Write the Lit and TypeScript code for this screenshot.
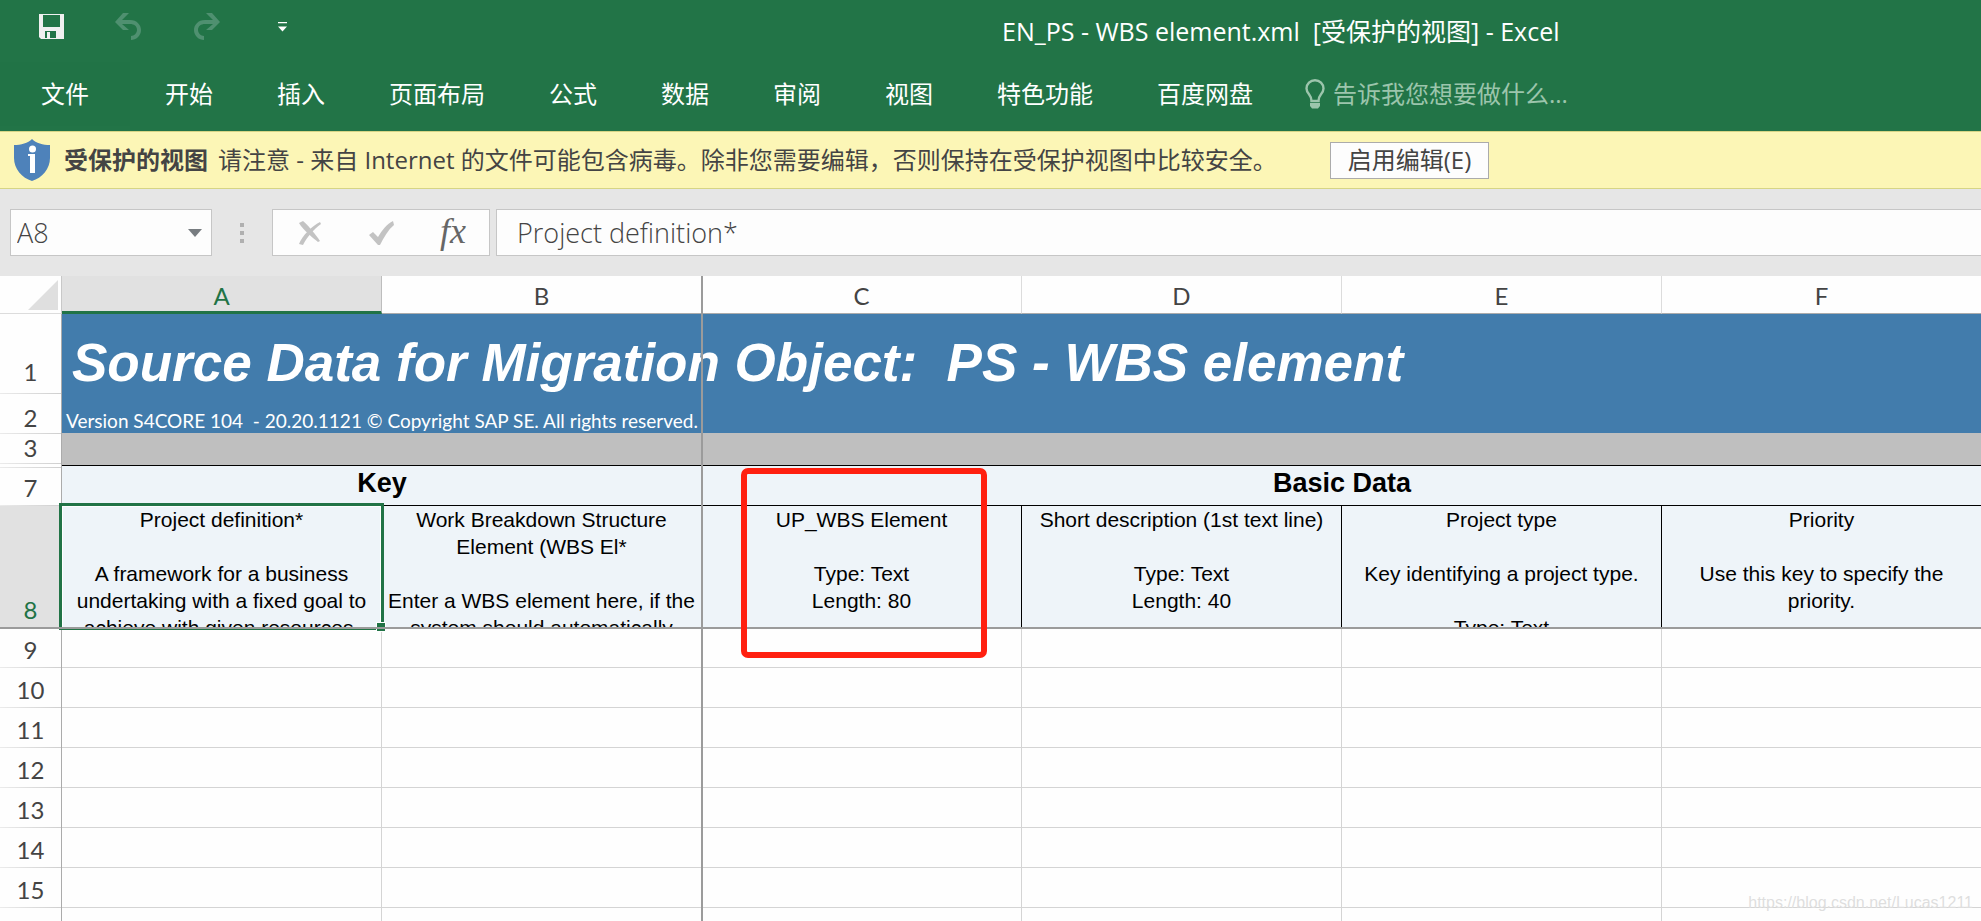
import { LitElement, html, css, nothing } from "lit";
import { customElement, property, state } from "lit/decorators.js";

const UI_FONT = css`"Open Sans", "Noto Sans CJK SC", sans-serif`;

const TABS = ["开始", "插入", "页面布局", "公式", "数据", "审阅", "视图", "特色功能", "百度网盘"];
const COLUMNS = ["A", "B", "C", "D", "E", "F"];
const EMPTY_ROWS = [9, 10, 11, 12, 13, 14, 15];

const FIELDS: string[][] = [
  ["Project definition*", "", "A framework for a business", "undertaking with a fixed goal to", "achieve with given resources."],
  ["Work Breakdown Structure", "Element (WBS El*", "", "Enter a WBS element here, if the", "system should automatically"],
  ["UP_WBS Element", "", "Type: Text", "Length: 80"],
  ["Short description (1st text line)", "", "Type: Text", "Length: 40"],
  ["Project type", "", "Key identifying a project type.", "", "Type: Text"],
  ["Priority", "", "Use this key to specify the", "priority."],
];

@customElement("title-bar")
class TitleBar extends LitElement {
  static styles = css`
    :host {
      display: flex;
      align-items: center;
      height: 62px;
      background: #227447;
      color: #fff;
      font: 25px/32px ${UI_FONT};
    }
    .quick {
      display: flex;
      align-items: center;
      flex: none;
      width: 1002px;
      height: 52px;
      align-self: flex-start;
      box-sizing: border-box;
      padding-left: 38px;
    }
    button {
      display: block;
      border: 0;
      padding: 0;
      margin: 0;
      background: none;
    }
    svg { display: block; }
    .undo { margin-left: 50px; }
    .redo { margin-left: 51px; }
    .more { margin-left: 58px; padding-top: 2px; }
    .name { white-space: pre; }
  `;
  render() {
    return html`
      <div class="quick">
        <button aria-label="保存">
          <svg width="27" height="26" viewBox="0 0 27 26">
            <path fill="#f0f0f0" fill-rule="evenodd" d="M1 1H26V26H3L1 24ZM5 2V14H22V2ZM7 18V25H9V19H12V25H18V18Z" />
          </svg>
        </button>
        <button class="undo" aria-label="撤消">
          <svg width="27" height="27" viewBox="0 0 27 27">
            <path fill="#4f9070" d="M8 0H14L7 7H15C22 7 26 12 26 17C26 23 21 27 16 27V23C19 23 22 20 22 17C22 13 19 11 15 11H7L14 17H8L0 9Z" />
          </svg>
        </button>
        <button class="redo" aria-label="恢复">
          <svg width="27" height="27" viewBox="0 0 27 27">
            <path fill="#4f9070" d="M19 0H13L20 7H12C5 7 1 12 1 17C1 23 6 27 11 27V23C8 23 5 20 5 17C5 13 8 11 12 11H20L13 17H19L27 9Z" />
          </svg>
        </button>
        <button class="more" aria-label="自定义快速访问工具栏">
          <svg width="9" height="10" viewBox="0 0 9 10"><path fill="#fff" d="M0 0H9V1.300H0ZM0 4.500H9L4.500 9.500Z" /></svg>
        </button>
      </div>
      <div class="name">EN_PS - WBS element.xml  [受保护的视图] - Excel</div>
    `;
  }
}

@customElement("ribbon-tabs")
class RibbonTabs extends LitElement {
  static styles = css`
    :host {
      display: flex;
      height: 69px;
      background: #227447;
      color: #fff;
      font: 24px/32px ${UI_FONT};
    }
    nav { display: flex; }
    button {
      height: 64px;
      margin: 0;
      border: 0;
      padding: 0 32px;
      background: none;
      color: inherit;
      font: inherit;
      white-space: nowrap;
    }
    .file {
      padding: 0 41px;
      margin-right: 3px;
      background: #217346;
    }
    label {
      display: flex;
      align-items: center;
      height: 64px;
      margin-left: 20px;
      gap: 8px;
    }
    svg { display: block; }
    input {
      width: 300px;
      border: 0;
      padding: 0;
      background: none;
      color: #fff;
      font: inherit;
      outline: none;
    }
    input::placeholder { color: #9cc5ac; opacity: 1; }
  `;
  render() {
    return html`
      <nav>
        <button class="file">文件</button>
        ${TABS.map((t) => html`<button>${t}</button>`)}
      </nav>
      <label>
        <svg width="20" height="30" viewBox="0 0 20 30" fill="none" stroke="#9cc5ac" stroke-width="2.400">
          <path d="M6.500 22C7 16 1.500 15 1.500 9.500A8.500 8.300 0 0 1 18.500 9.500C18.500 15 13 16 13.500 22Z" />
          <path fill="#9cc5ac" stroke="none" d="M5 24H15V27L13 29.500H7L5 27Z" />
        </svg>
        <input aria-label="告诉我您想要做什么" placeholder="告诉我您想要做什么..." />
      </label>
    `;
  }
}

@customElement("protected-bar")
class ProtectedBar extends LitElement {
  static styles = css`
    :host {
      display: flex;
      align-items: center;
      height: 58px;
      box-sizing: border-box;
      border-top: 1px solid #d6d585;
      border-bottom: 1px solid #d6d585;
      padding-left: 13px;
      background: #fcf6b6;
      color: #444;
      font: 24px/32px ${UI_FONT};
      white-space: nowrap;
    }
    svg { display: block; flex: none; }
    strong { margin-left: 13px; }
    .text { margin-left: 10px; width: 1112px; }
    button {
      box-sizing: border-box;
      height: 37px;
      margin: 0;
      width: 159px;
      border: 1px solid #ababab;
      padding: 0;
      background: #fdfdfd;
      color: inherit;
      font: inherit;
    }
  `;
  render() {
    return html`
      <svg width="38" height="42" viewBox="0 0 38 42">
        <path fill="#4e82ba" d="M19 0C23 4 30 6 37 6V19C37 30 29 39 19 42C9 39 1 30 1 19V6C8 6 15 4 19 0Z" />
        <circle cx="19.500" cy="10" r="3.500" fill="#fff" />
        <path fill="#fff" d="M15 15H22V34H17V17H15Z" />
      </svg>
      <strong>受保护的视图</strong>
      <span class="text">请注意 - 来自 Internet 的文件可能包含病毒。除非您需要编辑，否则保持在受保护视图中比较安全。</span>
      <button>启用编辑(E)</button>
    `;
  }
}

@customElement("formula-bar")
class FormulaBar extends LitElement {
  @property() cell = "A8";
  @property() content = "";

  static styles = css`
    :host {
      display: flex;
      align-items: center;
      height: 87px;
      box-sizing: border-box;
      padding-left: 10px;
      background: #e6e6e6;
      color: #444;
      font: 27px/36px ${UI_FONT};
    }
    .box {
      display: flex;
      align-items: center;
      box-sizing: border-box;
      height: 47px;
      border: 1px solid #c6c6c6;
      background: #fdfdfd;
    }
    .name {
      width: 202px;
      padding-right: 9px;
    }
    select {
      flex: 1;
      appearance: none;
      margin: 0;
      border: 0;
      padding: 0 0 0 6px;
      background: none;
      color: inherit;
      font: inherit;
      font-weight: 300;
      outline: none;
    }
    .grip {
      display: grid;
      gap: 4px;
      width: 60px;
      justify-content: center;
    }
    .grip i { width: 4px; height: 4px; background: #b0b0b0; }
    .tools {
      width: 218px;
      padding-left: 25px;
      gap: 47px;
    }
    button { margin: 0; border: 0; padding: 0; background: none; color: #666; }
    .fx { font: italic 36px/36px "Liberation Serif", serif; margin-left: -2px; padding-bottom: 4px; }
    svg { display: block; flex: none; }
    .formula { flex: 1; margin-left: 6px; border-right: 0; }
    input {
      flex: 1;
      min-width: 0;
      border: 0;
      padding: 0 0 0 20px;
      background: none;
      color: inherit;
      font: inherit;
      font-weight: 300;
      outline: none;
    }
  `;
  render() {
    return html`
      <div class="box name">
        <select aria-label="名称框"><option>${this.cell}</option></select>
        <svg width="14" height="8" viewBox="0 0 14 8"><path fill="#777c80" d="M0 0H14L7 8Z" /></svg>
      </div>
      <div class="grip"><i></i><i></i><i></i></div>
      <div class="box tools">
        <button aria-label="取消">
          <svg width="24" height="24" viewBox="0 0 24 24" fill="#c3c3c3">
            <path d="M1 2L5 0C9 3 18 14 22 20L20 21C16 18 5 9 1 2Z" />
            <path d="M22 1L23 3C16 8 9 16 5 24L1 23C4 15 14 5 22 1Z" />
          </svg>
        </button>
        <button aria-label="输入">
          <svg width="26" height="24" viewBox="0 0 26 24"><path fill="#c3c3c3" d="M0 14L4 11L9 16C13 9 18 3 24 0L25 4C19 9 15 16 11 24H9Z" /></svg>
        </button>
        <button class="fx" aria-label="插入函数">fx</button>
      </div>
      <div class="box formula">
        <input aria-label="编辑栏" .value=${this.content} />
      </div>
    `;
  }
}

@customElement("sheet-grid")
class SheetGrid extends LitElement {
  static styles = css`
    :host {
      display: block;
      position: relative;
      background: #fefefe;
      color: #444;
      font: 24px/28px Lato, sans-serif;
    }
    table {
      width: 100%;
      table-layout: fixed;
      border-collapse: separate;
      border-spacing: 0;
    }
    .rows { width: 62px; }
    th, td { box-sizing: border-box; padding: 0; font-weight: 400; }

    thead th {
      height: 38px;
      border-right: 1px solid #dcdcdc;
      border-bottom: 1px solid #ababab;
      padding-top: 2px;
    }
    thead th.active {
      border-right-color: #bdbdbd;
      border-bottom: 3px solid #217346;
      padding-top: 4px;
      background: #e1e1e1;
      color: #217346;
    }
    thead .corner { padding: 0; border-bottom-color: #dcdcdc; border-right-color: #c8c8c8; }
    .corner svg { display: block; margin: 4px 0 3px 28px; }

    tbody th {
      height: 40px;
      border-right: 1px solid #ababab;
      padding-bottom: 4px;
      vertical-align: bottom;
      background: linear-gradient(90deg, #ebebeb, #cfcfcf) bottom / 100% 1px no-repeat;
    }
    tbody th.r1 { height: 80px; padding-bottom: 8px; }
    tbody th.r2 { padding-bottom: 2px; }
    tbody th.r3 { height: 30px; padding-bottom: 2px; }
    tbody th.thin { height: 4px; padding: 0; line-height: 0; }
    tbody th.r7 { height: 38px; }
    tbody th.r8 { height: 122px; background: #e1e1e1; color: #217346; }

    .title {
      padding: 0 0 1px 10px;
      vertical-align: bottom;
      background: #427cac;
      color: #fff;
      font: italic 700 53px/60px "Liberation Sans", sans-serif;
      white-space: pre;
    }
    .version {
      border-bottom: 1px solid #bfbfbf;
      padding-left: 4px;
      vertical-align: bottom;
      background: #427cac;
      color: #fff;
      font-size: 19px;
      line-height: 24px;
      white-space: pre;
    }
    .gap { background: #bfbfbf; }
    .edge { background: linear-gradient(#bfbfbf 1px, #000 1px 2px, #eef4f9 2px); }
    .group {
      border-bottom: 1px solid #000;
      vertical-align: top;
      text-align: center;
      background: #eef4f9;
      color: #000;
      font: 700 27px/30px "Liberation Sans", sans-serif;
    }
    .field {
      position: relative;
      border-right: 1px solid #000;
      vertical-align: top;
      text-align: center;
      background: #eef4f9;
      color: #000;
      font: 21px/27px "Liberation Sans", sans-serif;
      white-space: nowrap;
    }
    .clip { height: 121px; overflow: hidden; }
    .clip div { min-height: 27px; }
    .cell { border-right: 1px solid #d4d4d4; border-bottom: 1px solid #d4d4d4; }

    .selection {
      position: absolute;
      z-index: 1;
      inset: -3px -3px -2px -3px;
      border: 3px solid #217346;
      border-bottom-width: 1px;
      box-shadow: inset 0 0 0 1px #fff;
    }
    .handle {
      position: absolute;
      z-index: 1;
      right: -4px;
      bottom: -3px;
      width: 8px;
      height: 8px;
      background: #217346;
      box-shadow: 0 0 0 1px #fff;
    }
    .mark {
      position: absolute;
      z-index: 2;
      top: -38px;
      left: 39px;
      width: 246px;
      height: 190px;
      box-sizing: border-box;
      border: 6px solid #ff2010;
      border-radius: 7px;
    }
    .freeze-x, .freeze-y { position: absolute; z-index: 1; background: #9b9b9b; }
    .freeze-x { left: 0; right: 0; top: 351px; height: 2px; }
    .freeze-y { top: 0; bottom: 0; width: 2px; left: calc(62px + (100% - 62px) / 3 - 1px); }
  `;

  render() {
    return html`
      <table>
        <colgroup><col class="rows" />${COLUMNS.map(() => html`<col />`)}</colgroup>
        <thead>
          <tr>
            <th class="corner">
              <svg width="30" height="30" viewBox="0 0 30 30"><path fill="#dfdfdf" d="M30 0V30H0Z" /></svg>
            </th>
            ${COLUMNS.map((c) => html`<th scope="col" class=${c === "A" ? "active" : ""}>${c}</th>`)}
          </tr>
        </thead>
        <tbody>
          <tr><th scope="row" class="r1">1</th><td class="title" colspan="6">Source Data for Migration Object:  PS - WBS element</td></tr>
          <tr><th scope="row" class="r2">2</th><td class="version" colspan="6">Version S4CORE 104  - 20.20.1121 © Copyright SAP SE. All rights reserved.</td></tr>
          <tr><th scope="row" class="r3">3</th><td class="gap" colspan="6"></td></tr>
          <tr><th class="thin"></th><td class="edge" colspan="6"></td></tr>
          <tr>
            <th scope="row" class="r7">7</th>
            <td class="group" colspan="2">Key</td>
            <td class="group" colspan="4">Basic Data</td>
          </tr>
          <tr>
            <th scope="row" class="r8">8</th>
            ${FIELDS.map(
              (lines, i) => html`<td class="field">
                <div class="clip">${lines.map((l) => html`<div>${l}</div>`)}</div>
                ${i === 0 ? html`<div class="selection"></div><div class="handle"></div>` : nothing}
                ${i === 2 ? html`<div class="mark"></div>` : nothing}
              </td>`
            )}
          </tr>
          ${EMPTY_ROWS.map((n) => html`<tr><th scope="row">${n}</th>${COLUMNS.map(() => html`<td class="cell"></td>`)}</tr>`)}
          <tr><th></th>${COLUMNS.map(() => html`<td class="cell"></td>`)}</tr>
        </tbody>
      </table>
      <div class="freeze-x"></div>
      <div class="freeze-y"></div>
    `;
  }
}

@customElement("app-root")
class AppRoot extends LitElement {
  @state() private selected = "A8";

  static styles = css`
    :host {
      display: flex;
      flex-direction: column;
      position: relative;
      height: 100vh;
      overflow: hidden;
    }
    title-bar, ribbon-tabs, protected-bar, formula-bar { flex: none; }
    .sheet { flex: 1; min-height: 0; overflow: hidden; }
    /* The last column's right border falls outside the window. */
    sheet-grid { margin-right: -1px; }
    .credit {
      position: absolute;
      right: 8px;
      bottom: 8px;
      color: #dedede;
      font: 16px/20px "Liberation Sans", sans-serif;
    }
  `;
  render() {
    return html`
      <title-bar></title-bar>
      <ribbon-tabs></ribbon-tabs>
      <protected-bar></protected-bar>
      <formula-bar .cell=${this.selected} .content=${FIELDS[0][0]}></formula-bar>
      <div class="sheet"><sheet-grid></sheet-grid></div>
      <div class="credit">https://blog.csdn.net/Lucas1211</div>
    `;
  }
}
